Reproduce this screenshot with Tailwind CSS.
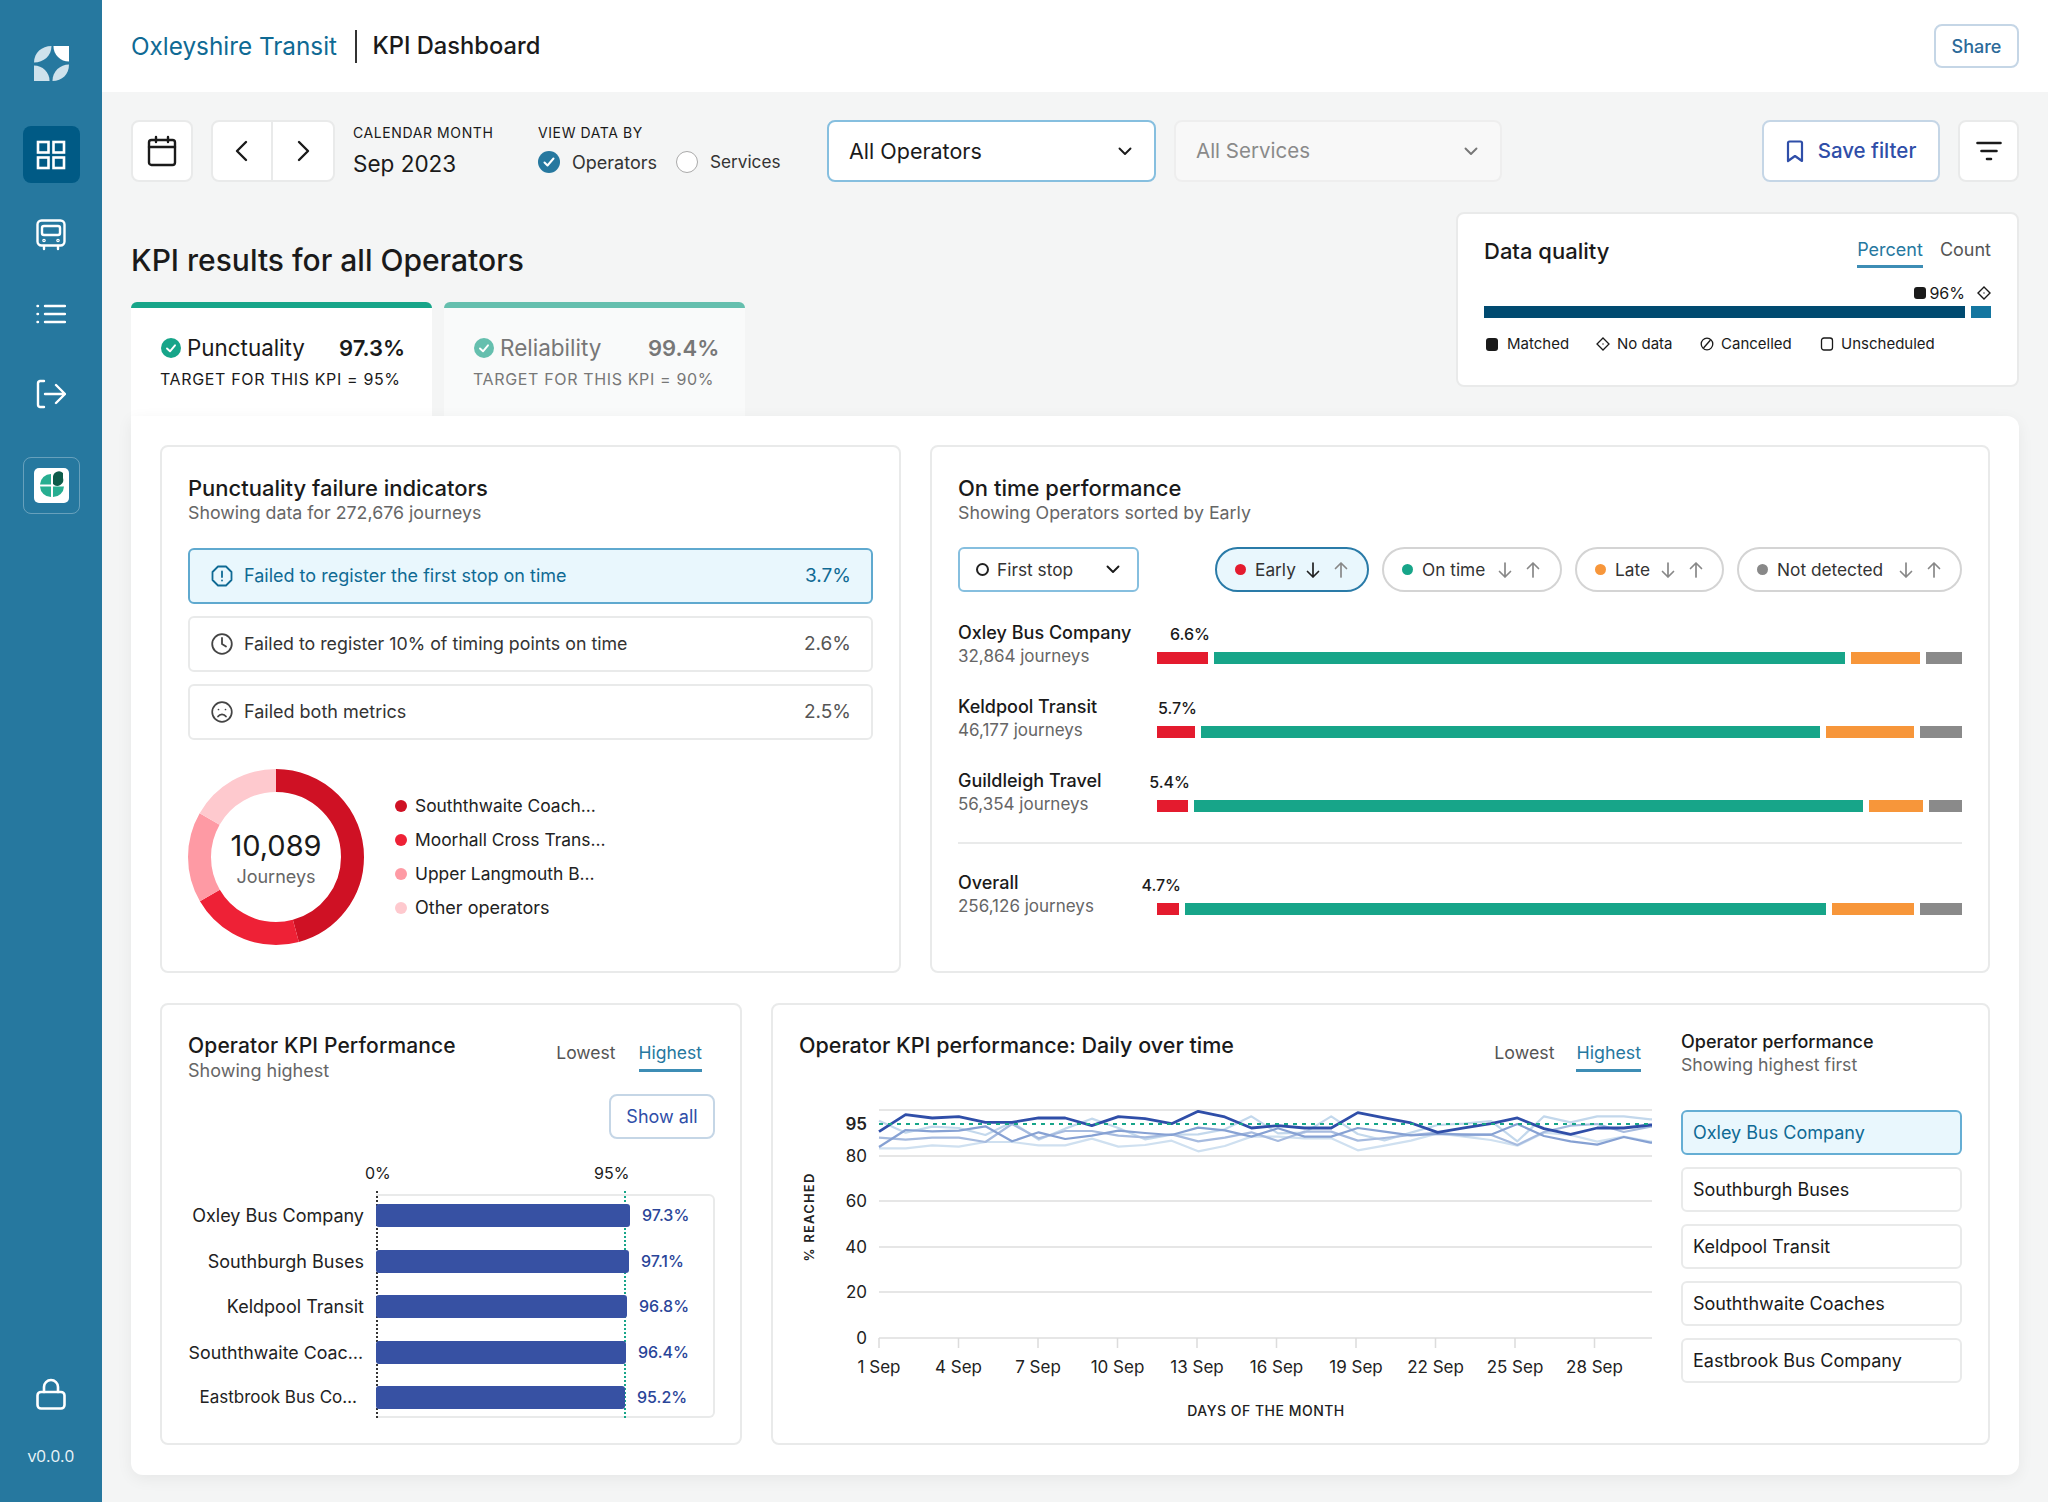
<!DOCTYPE html>
<html lang="en">
<head>
<meta charset="utf-8">
<title>KPI Dashboard</title>
<script src="https://cdn.jsdelivr.net/npm/@tailwindcss/browser@4"></script>
</head>
<body class="font-[family-name:Inter] text-[#1a1a1a]">
<div class="flex w-[2048px] h-[1502px] overflow-hidden bg-[#f4f5f5]">
  <aside class="w-[102px] shrink-0 h-full bg-[#26789f] flex flex-col items-center">
    <svg class="mt-[46px] w-[35px] h-[35px]" viewBox="0 0 36 36">
      <path d="M0 17 C0 7 8 0 18 0 C18 10 10 17 0 17Z" fill="#cfe2ec"/>
      <path d="M20 0 H36 V16 A16 16 0 0 1 20 0Z" fill="#fff"/>
      <path d="M0 20 A16 16 0 0 1 16 36 H0Z" fill="#cfe2ec"/>
      <path d="M19 36 C19 26 27 19 36 19 C36 29 29 36 19 36Z" fill="#cfe2ec"/>
    </svg>
    <div class="mt-[45px] w-[57px] h-[57px] rounded-lg bg-[#005a85] flex items-center justify-center">
      <svg class="w-[30px] h-[30px]" viewBox="0 0 30 30" fill="none" stroke="#fff" stroke-width="2.6"><rect x="2" y="2" width="10.5" height="10.5"/><rect x="17.5" y="2" width="10.5" height="10.5"/><rect x="2" y="17.5" width="10.5" height="10.5"/><rect x="17.5" y="17.5" width="10.5" height="10.5"/></svg>
    </div>
    <div class="mt-[23px] w-[57px] h-[57px] flex items-center justify-center">
      <svg class="w-[30px] h-[32px]" viewBox="0 0 30 32" fill="none" stroke="#fff" stroke-width="2.4" stroke-linecap="round" stroke-linejoin="round"><rect x="1.5" y="1.5" width="27" height="25" rx="4"/><rect x="6" y="7" width="18" height="9" rx="2"/><path d="M8 27v3M22 27v3"/><circle cx="8" cy="21.5" r=".6"/><circle cx="22" cy="21.5" r=".6"/></svg>
    </div>
    <div class="mt-[22px] w-[57px] h-[57px] flex items-center justify-center">
      <svg class="w-[30px] h-[20px]" viewBox="0 0 30 20" fill="none" stroke="#fff" stroke-width="2.4" stroke-linecap="round"><path d="M9 2h20M9 10h20M9 18h20"/><path d="M1.5 2h.5M1.5 10h.5M1.5 18h.5"/></svg>
    </div>
    <div class="mt-[23px] w-[57px] h-[57px] flex items-center justify-center">
      <svg class="w-[30px] h-[30px]" viewBox="0 0 30 30" fill="none" stroke="#fff" stroke-width="2.4" stroke-linecap="round" stroke-linejoin="round"><path d="M8 2H4a2.5 2.5 0 0 0-2 2.500v21a2.500 2.500 0 0 0 2 2.500h4"/><path d="M9 15h20M20 6l9 9-9 9"/></svg>
    </div>
    <div class="mt-[35px] w-[57px] h-[57px] rounded-lg border border-white/30 flex items-center justify-center">
      <svg class="w-[35px] h-[35px]" viewBox="0 0 35 35"><rect width="35" height="35" rx="5" fill="#fff"/>
        <path d="M17 6 V16.500 H6 A11 11 0 0 1 17 6Z" fill="#27ae91"/>
        <path d="M17 18.500 V29 A11 11 0 0 1 6 18.500Z" fill="#27ae91"/>
        <path d="M19 18.500 H30 A11 11 0 0 1 19 29Z" fill="#27ae91"/>
        <path d="M19 16 V10 A6 6 0 0 1 29 5 V10 A6 6 0 0 1 19 16Z" fill="#0d5c4b"/>
      </svg>
    </div>
    <svg class="mt-auto w-[30px] h-[32px]" viewBox="0 0 30 32" fill="none" stroke="#fff" stroke-width="2.6" stroke-linecap="round" stroke-linejoin="round"><rect x="1.500" y="14" width="27" height="16.500" rx="3.500"/><path d="M8 14V9a7 7 0 0 1 14 0v5"/></svg>
    <div class="mt-[35px] mb-[35px] font-[family-name:'Open_Sans'] text-[17px] leading-[22px] text-[#eaf4f8]">v0.0.0</div>
  </aside>

  <main class="flex-1 flex flex-col min-w-0">
    <header class="h-[92px] bg-white flex items-center pl-[29px] pr-[29px] shrink-0">
      <div class="text-[24.300px] leading-[32px] text-[#0f6a94] w-[224px] whitespace-nowrap">Oxleyshire Transit</div>
      <div class="w-[1.5px] h-[33px] bg-[#333]"></div>
      <div class="ml-[16px] text-[23.700px] leading-[32px] font-medium">KPI Dashboard</div>
      <button class="ml-auto w-[85px] h-[44px] rounded-lg border-2 border-[#c5d6e6] text-[18px] font-medium text-[#2c6a99]">Share</button>
    </header>

    <section class="mt-[28px] mx-[29px] flex h-[63px] shrink-0 w-[1888px]">
      <button class="w-[62px] h-[62px] rounded-lg bg-white border-2 border-[#e9eaea] flex items-center justify-center">
        <svg class="w-[30px] h-[32px]" viewBox="0 0 30 32" fill="none" stroke="#1a1a1a" stroke-width="2.4" stroke-linecap="round" stroke-linejoin="round"><rect x="2" y="5" width="26" height="25" rx="2.500"/><path d="M2 12h26M9 2v5M21 2v5"/></svg>
      </button>
      <div class="ml-[18px] w-[124px] h-[62px] rounded-lg bg-white border-2 border-[#e9eaea] flex">
        <button class="w-[60px] h-full border-r-2 border-[#e9eaea] flex items-center justify-center"><svg class="w-[16px] h-[24px]" viewBox="0 0 16 24" fill="none" stroke="#1a1a1a" stroke-width="2.400" stroke-linecap="round" stroke-linejoin="round"><path d="M12 3 3 12l9 9"/></svg></button>
        <button class="flex-1 h-full flex items-center justify-center"><svg class="w-[16px] h-[24px]" viewBox="0 0 16 24" fill="none" stroke="#1a1a1a" stroke-width="2.400" stroke-linecap="round" stroke-linejoin="round"><path d="m4 3 9 9-9 9"/></svg></button>
      </div>
      <div class="ml-[18px] w-[185px] flex flex-col pt-[3px]">
        <div class="text-[14px] leading-[20px] tracking-[0.6px]">CALENDAR MONTH</div>
        <div class="mt-[5px] text-[22.500px] leading-[32px]">Sep 2023</div>
      </div>
      <div class="w-[289px] flex flex-col pt-[3px]">
        <div class="text-[14px] leading-[20px] tracking-[0.6px]">VIEW DATA BY</div>
        <div class="mt-[6px] flex items-center h-[26px]">
          <span class="w-[22px] h-[22px] rounded-full bg-[#26789f] flex items-center justify-center"><svg class="w-[14px] h-[14px]" viewBox="0 0 14 14" fill="none" stroke="#fff" stroke-width="2" stroke-linecap="round" stroke-linejoin="round"><path d="m2.500 7.500 3 3 6-7"/></svg></span>
          <span class="ml-[12px] text-[18px] text-[#333] w-[104px]">Operators</span>
          <span class="w-[22px] h-[22px] rounded-full border-[1.5px] border-[#aaa] bg-white"></span>
          <span class="ml-[12px] text-[17.200px] text-[#333]">Services</span>
        </div>
      </div>
      <button class="w-[329px] h-[62px] rounded-lg bg-white border-2 border-[#86bfdf] flex items-center justify-between pl-[20px] pr-[22px] text-[21.500px]">All Operators
        <svg class="w-[14px] h-[9px]" viewBox="0 0 14 9" fill="none" stroke="#1a1a1a" stroke-width="1.900" stroke-linecap="round" stroke-linejoin="round"><path d="m1.500 1.500 5.500 5.500 5.500-5.500"/></svg>
      </button>
      <button class="ml-[18px] w-[328px] h-[62px] rounded-lg bg-[#f8f8f8] border-2 border-[#eeeeee] flex items-center justify-between pl-[20px] pr-[22px] text-[20.500px] text-[#8a8a8a]">All Services
        <svg class="w-[14px] h-[9px]" viewBox="0 0 14 9" fill="none" stroke="#777" stroke-width="1.900" stroke-linecap="round" stroke-linejoin="round"><path d="m1.500 1.500 5.500 5.500 5.500-5.500"/></svg>
      </button>
      <button class="ml-auto w-[178px] h-[62px] rounded-lg bg-white border-2 border-[#c5d6e6] flex items-center justify-center gap-[14px] text-[20.500px] font-medium text-[#2f4ea8]">
        <svg class="w-[18px] h-[23px]" viewBox="0 0 18 23" fill="none" stroke="#2f4ea8" stroke-width="2.200" stroke-linecap="round" stroke-linejoin="round"><path d="M2 3a1.500 1.500 0 0 1 1.500-1.500h11A1.500 1.500 0 0 1 16 3v18l-7-5-7 5Z"/></svg>
        Save filter
      </button>
      <button class="ml-[18px] w-[61px] h-[62px] rounded-lg bg-white border-2 border-[#e9eaea] flex items-center justify-center">
        <svg class="w-[26px] h-[20px]" viewBox="0 0 26 20" fill="none" stroke="#1a1a1a" stroke-width="2.600" stroke-linecap="round"><path d="M1.500 2h23M5.500 10h15M11 18h4"/></svg>
      </button>
    </section>

    <section class="mt-[29px] mx-[29px] w-[1888px] h-[204px] shrink-0 flex justify-between items-start">
      <div class="h-full flex flex-col">
        <h1 class="mt-[28px] text-[30px] leading-[40px] font-medium">KPI results for all Operators</h1>
        <div class="mt-auto flex gap-[12px]">
          <div class="w-[301px] h-[114px] bg-white rounded-t-md border-t-[6px] border-[#17a589] pl-[29px] pt-[26px]">
            <div class="flex items-center h-[28px]">
              <svg class="ml-[1px] w-[20px] h-[20px]" viewBox="0 0 20 20"><circle cx="10" cy="10" r="10" fill="#17a589"/><path d="m6 10.500 3 2.800 5-6" fill="none" stroke="#fff" stroke-width="1.900" stroke-linecap="round" stroke-linejoin="round"/></svg>
              <span class="ml-[6px] text-[22.400px] w-[152px]">Punctuality</span>
              <span class="text-[22px] font-semibold">97.3%</span>
            </div>
            <div class="mt-[6px] text-[16px] leading-[22px] tracking-[0.64px]">TARGET FOR THIS KPI = 95%</div>
          </div>
          <div class="w-[301px] h-[114px] bg-[#f9fafa] rounded-t-md border-t-[6px] border-[#65bfae] pl-[29px] pt-[26px] text-[#777]">
            <div class="flex items-center h-[28px]">
              <svg class="ml-[1px] w-[20px] h-[20px]" viewBox="0 0 20 20"><circle cx="10" cy="10" r="10" fill="#65bfae"/><path d="m6 10.500 3 2.800 5-6" fill="none" stroke="#fff" stroke-width="1.900" stroke-linecap="round" stroke-linejoin="round"/></svg>
              <span class="ml-[6px] text-[22.500px] w-[148px]">Reliability</span>
              <span class="text-[22px] font-semibold">99.4%</span>
            </div>
            <div class="mt-[6px] text-[16px] leading-[22px] tracking-[0.64px]">TARGET FOR THIS KPI = 90%</div>
          </div>
        </div>
      </div>
      <div class="w-[563px] h-[175px] bg-white rounded-lg border-2 border-[#e9eaea] px-[26px] pt-[23px]">
        <div class="flex justify-between items-start">
          <div class="text-[22px] leading-[28px] font-medium">Data quality</div>
          <div class="flex gap-[17px] text-[18px] leading-[26px]">
            <span class="text-[#26789f] border-b-[3px] border-[#3d8db5] h-[31px]">Percent</span>
            <span class="text-[#555]">Count</span>
          </div>
        </div>
        <div class="mt-[14px] flex justify-end items-center h-[22px] text-[16px]">
          <span class="w-[12px] h-[12px] rounded-[3px] bg-[#1a1a1a]"></span>
          <span class="ml-[3px]">96%</span>
          <svg class="ml-[12px] w-[14px] h-[14px]" viewBox="0 0 14 14" fill="none" stroke="#1a1a1a" stroke-width="1.400"><path d="M7 1 13 7 7 13 1 7Z"/><circle cx="7" cy="7" r=".7" fill="#1a1a1a" stroke="none"/></svg>
        </div>
        <div class="mt-[2px] flex gap-[6px] h-[12px]">
          <div class="w-[481px] bg-[#004a70]"></div>
          <div class="flex-1 bg-[#1476a0]"></div>
        </div>
        <div class="mt-[16px] flex items-center h-[20px] text-[15px]">
          <span class="w-[12px] h-[13px] rounded-[3px] bg-[#1a1a1a] ml-[2px]"></span><span class="ml-[9px] w-[89px]">Matched</span>
          <svg class="w-[14px] h-[14px]" viewBox="0 0 14 14" fill="none" stroke="#1a1a1a" stroke-width="1.300"><path d="M7 1 13 7 7 13 1 7Z"/><circle cx="7" cy="7" r=".7" fill="#1a1a1a" stroke="none"/></svg><span class="ml-[7px] w-[83px]">No data</span>
          <svg class="w-[14px] h-[14px]" viewBox="0 0 14 14" fill="none" stroke="#1a1a1a" stroke-width="1.300"><circle cx="7" cy="7" r="5.800"/><path d="M3.500 11 10.500 3"/></svg><span class="ml-[7px] w-[99px]">Cancelled</span>
          <svg class="w-[14px] h-[14px]" viewBox="0 0 14 14" fill="none" stroke="#1a1a1a" stroke-width="1.300"><rect x="1.500" y="1" width="11" height="12" rx="2.500"/></svg><span class="ml-[7px]">Unscheduled</span>
        </div>
      </div>
    </section>

    <section class="mx-[29px] w-[1888px] h-[1059px] shrink-0 bg-white rounded-b-xl rounded-tr-xl shadow-[0_4px_16px_rgba(0,0,0,0.06)] p-[29px] flex flex-col gap-[30px]">
      <div class="flex gap-[29px] h-[528px]">
        <div class="w-[741px] border-2 border-[#e9eaea] rounded-lg px-[26px] pt-[28px]">
          <h2 class="text-[22px] leading-[26px] font-medium">Punctuality failure indicators</h2>
          <p class="mt-[1px] text-[17.800px] leading-[22px] text-[#666]">Showing data for 272,676 journeys</p>
          <div class="mt-[24px] flex flex-col gap-[12px]">
            <div class="h-[56px] rounded-md border-2 border-[#5fa9cf] bg-[#e9f7fd] flex items-center pl-[21px] pr-[20px] text-[#0f6a94]">
              <svg class="w-[22px] h-[22px]" viewBox="0 0 22 22" fill="none" stroke="#0f6a94" stroke-width="1.800" stroke-linecap="round" stroke-linejoin="round"><path d="M7 1.500h8L20.500 7v8L15 20.500H7L1.500 15V7Z"/><path d="M11 6.500v5.500M11 15.500h.01"/></svg>
              <span class="ml-[11px] text-[18px] mt-[-2px]">Failed to register the first stop on time</span>
              <span class="ml-auto text-[19px]">3.7%</span>
            </div>
            <div class="h-[56px] rounded-md border-2 border-[#e9eaea] flex items-center pl-[21px] pr-[20px] text-[#333]">
              <svg class="w-[22px] h-[22px]" viewBox="0 0 22 22" fill="none" stroke="#444" stroke-width="1.800" stroke-linecap="round" stroke-linejoin="round"><circle cx="11" cy="11" r="9.800"/><path d="M11 5v6l4 2.500"/></svg>
              <span class="ml-[11px] text-[17.800px]">Failed to register 10% of timing points on time</span>
              <span class="ml-auto text-[19px] text-[#555]">2.6%</span>
            </div>
            <div class="h-[56px] rounded-md border-2 border-[#e9eaea] flex items-center pl-[21px] pr-[20px] text-[#333]">
              <svg class="w-[22px] h-[22px]" viewBox="0 0 22 22" fill="none" stroke="#444" stroke-width="1.700" stroke-linecap="round" stroke-linejoin="round"><circle cx="11" cy="11" r="9.800"/><path d="M7 15.500c1-1.500 2.500-2.200 4-2.200s3 .7 4 2.200M7.500 8.500h.01M14.500 8.500h.01"/></svg>
              <span class="ml-[11px] text-[18px] mt-[-2px]">Failed both metrics</span>
              <span class="ml-auto text-[19px] text-[#555]">2.5%</span>
            </div>
          </div>
          <div class="mt-[29px] flex items-center">
            <div class="relative w-[176px] h-[176px]">
              <svg class="w-[176px] h-[176px] -rotate-90" viewBox="0 0 176 176" fill="none" stroke-width="23">
                <circle cx="88" cy="88" r="76.500" pathLength="100" stroke="#cf1124" stroke-dasharray="45.800 54.200"/>
                <circle cx="88" cy="88" r="76.500" pathLength="100" stroke="#ee2136" stroke-dasharray="20.800 79.200" stroke-dashoffset="-45.800"/>
                <circle cx="88" cy="88" r="76.500" pathLength="100" stroke="#fe9aa4" stroke-dasharray="16.700 83.300" stroke-dashoffset="-66.600"/>
                <circle cx="88" cy="88" r="76.500" pathLength="100" stroke="#fec9ce" stroke-dasharray="16.700 83.300" stroke-dashoffset="-83.300"/>
              </svg>
              <div class="absolute inset-0 flex flex-col items-center justify-center">
                <div class="text-[29px] leading-[36px] mt-[2px]">10,089</div>
                <div class="text-[18px] leading-[24px] text-[#666] mt-[1px]">Journeys</div>
              </div>
            </div>
            <ul class="ml-[31px] flex flex-col text-[17.400px] leading-[34px] text-[#222]">
              <li class="flex items-center gap-[8px]"><span class="w-[12px] h-[12px] rounded-full bg-[#cf1124]"></span>Souththwaite Coach…</li>
              <li class="flex items-center gap-[8px]"><span class="w-[12px] h-[12px] rounded-full bg-[#ee2136]"></span>Moorhall Cross Trans…</li>
              <li class="flex items-center gap-[8px]"><span class="w-[12px] h-[12px] rounded-full bg-[#fe9aa4]"></span>Upper Langmouth B…</li>
              <li class="flex items-center gap-[8px] text-[18px]"><span class="w-[12px] h-[12px] rounded-full bg-[#fec9ce]"></span>Other operators</li>
            </ul>
          </div>
        </div>

        <div class="w-[1060px] border-2 border-[#e9eaea] rounded-lg px-[26px] pt-[28px]">
          <h2 class="text-[22px] leading-[26px] font-medium">On time performance</h2>
          <p class="mt-[1px] text-[17.800px] leading-[22px] text-[#666]">Showing Operators sorted by Early</p>
          <div class="mt-[23px] flex h-[45px] text-[17.300px] text-[#333]">
            <div class="w-[181px] rounded-md border-2 border-[#86bfdf] flex items-center pl-[16px] pr-[17px]">
              <span class="w-[13px] h-[13px] rounded-full border-2 border-[#222]"></span>
              <span class="ml-[8px]">First stop</span>
              <svg class="ml-auto w-[14px] h-[9px]" viewBox="0 0 14 9" fill="none" stroke="#1a1a1a" stroke-width="1.900" stroke-linecap="round" stroke-linejoin="round"><path d="m1.500 1.500 5.500 5.500 5.500-5.500"/></svg>
            </div>
            <div class="ml-auto flex gap-[13px]">
              <div class="w-[154px] rounded-full border-2 border-[#2a7ba8] bg-[#e9f7fd] flex items-center pl-[18px]">
                <span class="w-[11px] h-[11px] rounded-full bg-[#e41b2e]"></span><span class="ml-[9px] w-[50px]">Early</span>
                <svg class="w-[16px] h-[18px]" viewBox="0 0 16 18" fill="none" stroke="#222" stroke-width="1.700" stroke-linecap="round" stroke-linejoin="round"><path d="M8 2v14M2.500 10.500 8 16l5.500-5.500"/></svg>
                <svg class="ml-[12px] w-[16px] h-[18px]" viewBox="0 0 16 18" fill="none" stroke="#888" stroke-width="1.700" stroke-linecap="round" stroke-linejoin="round"><path d="M8 16V2M2.500 7.500 8 2l5.500 5.500"/></svg>
              </div>
              <div class="w-[180px] rounded-full border-2 border-[#d4d4d4] flex items-center pl-[18px]">
                <span class="w-[11px] h-[11px] rounded-full bg-[#17a589]"></span><span class="ml-[9px] w-[75px]">On time</span>
                <svg class="w-[16px] h-[18px]" viewBox="0 0 16 18" fill="none" stroke="#888" stroke-width="1.700" stroke-linecap="round" stroke-linejoin="round"><path d="M8 2v14M2.500 10.500 8 16l5.500-5.500"/></svg>
                <svg class="ml-[12px] w-[16px] h-[18px]" viewBox="0 0 16 18" fill="none" stroke="#888" stroke-width="1.700" stroke-linecap="round" stroke-linejoin="round"><path d="M8 16V2M2.500 7.500 8 2l5.500 5.500"/></svg>
              </div>
              <div class="w-[149px] rounded-full border-2 border-[#d4d4d4] flex items-center pl-[18px]">
                <span class="w-[11px] h-[11px] rounded-full bg-[#f7963a]"></span><span class="ml-[9px] w-[45px]">Late</span>
                <svg class="w-[16px] h-[18px]" viewBox="0 0 16 18" fill="none" stroke="#888" stroke-width="1.700" stroke-linecap="round" stroke-linejoin="round"><path d="M8 2v14M2.500 10.500 8 16l5.500-5.500"/></svg>
                <svg class="ml-[12px] w-[16px] h-[18px]" viewBox="0 0 16 18" fill="none" stroke="#888" stroke-width="1.700" stroke-linecap="round" stroke-linejoin="round"><path d="M8 16V2M2.500 7.500 8 2l5.500 5.500"/></svg>
              </div>
              <div class="w-[225px] rounded-full border-2 border-[#d4d4d4] flex items-center pl-[18px]">
                <span class="w-[11px] h-[11px] rounded-full bg-[#888]"></span><span class="ml-[9px] w-[121px]">Not detected</span>
                <svg class="w-[16px] h-[18px]" viewBox="0 0 16 18" fill="none" stroke="#888" stroke-width="1.700" stroke-linecap="round" stroke-linejoin="round"><path d="M8 2v14M2.500 10.500 8 16l5.500-5.500"/></svg>
                <svg class="ml-[12px] w-[16px] h-[18px]" viewBox="0 0 16 18" fill="none" stroke="#888" stroke-width="1.700" stroke-linecap="round" stroke-linejoin="round"><path d="M8 16V2M2.500 7.500 8 2l5.500 5.500"/></svg>
              </div>
            </div>
          </div>

          <div class="mt-[28px] flex flex-col">
            <div class="h-[74px] flex">
              <div class="w-[199px]"><div class="text-[18px] leading-[24px] font-medium whitespace-nowrap pt-[1px]">Oxley Bus Company</div><div class="text-[17px] leading-[23px] text-[#666]">32,864 journeys</div></div>
              <div class="flex-1 pt-[3px]">
                <div class="w-[53px] flex justify-end text-[16px] leading-[22px] font-medium whitespace-nowrap">6.6%</div>
                <div class="mt-[7px] flex gap-[6px] h-[12px]"><div class="w-[51px] bg-[#e41b2e]"></div><div class="w-[631px] bg-[#17a589]"></div><div class="w-[69px] bg-[#f7963a]"></div><div class="flex-1 bg-[#8a8a8a]"></div></div>
              </div>
            </div>
            <div class="h-[74px] flex">
              <div class="w-[199px]"><div class="text-[18px] leading-[24px] font-medium pt-[1px]">Keldpool Transit</div><div class="text-[17px] leading-[23px] text-[#666]">46,177 journeys</div></div>
              <div class="flex-1 pt-[3px]">
                <div class="w-[40px] flex justify-end text-[16px] leading-[22px] font-medium whitespace-nowrap">5.7%</div>
                <div class="mt-[7px] flex gap-[6px] h-[12px]"><div class="w-[38px] bg-[#e41b2e]"></div><div class="w-[619px] bg-[#17a589]"></div><div class="w-[88px] bg-[#f7963a]"></div><div class="flex-1 bg-[#8a8a8a]"></div></div>
              </div>
            </div>
            <div class="h-[74px] flex">
              <div class="w-[199px]"><div class="text-[18px] leading-[24px] font-medium pt-[1px]">Guildleigh Travel</div><div class="text-[17px] leading-[23px] text-[#666]">56,354 journeys</div></div>
              <div class="flex-1 pt-[3px]">
                <div class="w-[33px] flex justify-end text-[16px] leading-[22px] font-medium whitespace-nowrap">5.4%</div>
                <div class="mt-[7px] flex gap-[6px] h-[12px]"><div class="w-[31px] bg-[#e41b2e]"></div><div class="w-[669px] bg-[#17a589]"></div><div class="w-[54px] bg-[#f7963a]"></div><div class="flex-1 bg-[#8a8a8a]"></div></div>
              </div>
            </div>
            <div class="h-[2px] bg-[#e9eaea]"></div>
            <div class="mt-[27px] h-[74px] flex">
              <div class="w-[199px]"><div class="text-[18px] leading-[24px] font-medium">Overall</div><div class="text-[17px] leading-[22px] text-[#666]">256,126 journeys</div></div>
              <div class="flex-1 pt-[3px]">
                <div class="w-[24px] flex justify-end text-[16px] leading-[22px] font-medium whitespace-nowrap">4.7%</div>
                <div class="mt-[7px] flex gap-[6px] h-[12px]"><div class="w-[22px] bg-[#e41b2e]"></div><div class="w-[641px] bg-[#17a589]"></div><div class="w-[82px] bg-[#f7963a]"></div><div class="flex-1 bg-[#8a8a8a]"></div></div>
              </div>
            </div>
          </div>
        </div>
      </div>

      <div class="flex gap-[29px] h-[442px]">
        <div class="w-[582px] border-2 border-[#e9eaea] rounded-lg pl-[26px] pr-[25px] pt-[27px] flex flex-col">
          <div class="flex justify-between items-start">
            <div>
              <h2 class="text-[21px] leading-[26px] font-medium tracking-[0.15px] pt-[1px]">Operator KPI Performance</h2>
              <p class="mt-[1px] text-[18px] leading-[22px] text-[#666]">Showing highest</p>
            </div>
            <div class="mt-[8px] mr-[13px] flex gap-[23px] text-[17.500px] leading-[26px]">
              <span class="text-[#555]">Lowest</span>
              <span class="text-[#26789f] border-b-[3px] border-[#3d8db5] h-[32px]">Highest</span>
            </div>
          </div>
          <button class="mt-[12px] self-end w-[106px] h-[45px] rounded-lg border-2 border-[#c5d6e6] text-[18px] text-[#2f4ea8]">Show all</button>
          <div class="mt-[23px] ml-[177px] flex gap-[205px] text-[16px] leading-[22px] h-[22px]"><span class="w-[24px]">0%</span><span>95%</span></div>
          <div class="mt-[10px] flex">
            <ul class="w-[188px] pt-[10px] flex flex-col gap-[22.600px] text-[18px] leading-[23px] text-right text-[#222] whitespace-nowrap">
              <li class="pr-[12px]">Oxley Bus Company</li>
              <li class="pr-[12px]">Southburgh Buses</li>
              <li class="pr-[12px]">Keldpool Transit</li>
              <li class="pr-[13px] text-[17.800px]">Souththwaite Coac…</li>
              <li class="pr-[19px] text-[17px]">Eastbrook Bus Co…</li>
            </ul>
            <div class="relative w-[339px] h-[224px] border-2 border-l-0 border-[#e9eaea] rounded-r-md pt-[8px] flex flex-col gap-[22.600px] text-[16px] leading-[23px] font-medium text-[#2a4599]">
              <div class="absolute left-0 top-[-5px] bottom-[-2px] border-l-2 border-dotted border-[#333]"></div>
              <div class="absolute left-[248px] top-[-5px] bottom-[-2px] border-l-2 border-dotted border-[#17a589]"></div>
              <div class="relative flex items-center"><div class="h-[23px] w-[254px] rounded-[3px] bg-[#3751a3]"></div><span class="ml-[12px]">97.3%</span></div>
              <div class="relative flex items-center"><div class="h-[23px] w-[253px] rounded-[3px] bg-[#3751a3]"></div><span class="ml-[12px]">97.1%</span></div>
              <div class="relative flex items-center"><div class="h-[23px] w-[251px] rounded-[3px] bg-[#3751a3]"></div><span class="ml-[12px]">96.8%</span></div>
              <div class="relative flex items-center"><div class="h-[23px] w-[250px] rounded-[3px] bg-[#3751a3]"></div><span class="ml-[12px]">96.4%</span></div>
              <div class="relative flex items-center"><div class="h-[23px] w-[249px] rounded-[3px] bg-[#3751a3]"></div><span class="ml-[12px]">95.2%</span></div>
            </div>
          </div>
        </div>

        <div class="w-[1219px] border-2 border-[#e9eaea] rounded-lg px-[26px] pt-[27px] flex gap-[29px]">
          <div class="w-[853px] shrink-0">
            <div class="flex justify-between items-start h-[40px]">
              <h2 class="text-[21.500px] leading-[26px] font-medium">Operator KPI performance: Daily over time</h2>
              <div class="mt-[8px] mr-[11px] flex gap-[22px] text-[17.800px] leading-[26px]">
                <span class="text-[#555]">Lowest</span>
                <span class="text-[#26789f] border-b-[3px] border-[#3d8db5] h-[32px]">Highest</span>
              </div>
            </div>
            <svg class="mt-[23px] w-[853px] h-[335px]" viewBox="0 0 853 335" fill="none">
              <g stroke="#e6e6e6" stroke-width="2">
                <path d="M80 15H853M80 61H853M80 106H853M80 152H853M80 197H853M80 243H853"/>
              </g>
              <g stroke="#dcdcdc" stroke-width="1.500">
                <path d="M80 243v10M159.500 243v10M239 243v10M318.500 243v10M398 243v10M477.500 243v10M557 243v10M636.500 243v10M716 243v10M795.500 243v10"/>
              </g>
              <g transform="translate(80,-95) scale(26.6,0.3333)" stroke-width="2.200" stroke-linejoin="round">
                <polyline vector-effect="non-scaling-stroke" stroke="#cfe0f0" points="0,445 1,445 2,436 3,440 4,426 5,426 6,436 7,436 8,416 9,440 10,435 11,422 12,454 13,438 14,410 15,410 16,415 17,415 18,451 19,437 20,422 21,400 22,410 23,420 24,437 25,398 26,405 27,425 28,410 29,425 29.100,425"/>
                <polyline vector-effect="non-scaling-stroke" stroke="#c3d8ec" points="0,362 1,398 2,380 3,384 4,405 5,367 6,419 7,386 8,356 9,384 10,418 11,404 12,403 13,388 14,349 15,400 16,398 17,349 18,402 19,421 20,398 21,375 22,371 23,363 24,424 25,349 26,367 27,349 28,349 29,358 29.100,358"/>
                <polyline vector-effect="non-scaling-stroke" stroke="#a6bbdf" points="0,413 1,419 2,413 3,413 4,426 5,372 6,415 7,393 8,393 9,407 10,412 11,403 12,424 13,413 14,397 15,423 16,395 17,395 18,422 19,414 20,405 21,398 22,406 23,404 24,435 25,396 26,377 27,372 28,396 29,380 29.100,380"/>
                <polyline vector-effect="non-scaling-stroke" stroke="#86a1d3" points="0,441 1,390 2,394 3,392 4,379 5,424 6,397 7,417 8,407 9,392 10,399 11,405 12,383 13,391 14,410 15,385 16,410 17,410 18,384 19,395 20,406 21,402 22,403 23,404 24,372 25,408 26,424 27,434 28,411 29,428 29.100,428"/>
                <polyline vector-effect="non-scaling-stroke" stroke="#2f4ea8" stroke-width="2.800" points="0,395 1,344 2,354 3,350 4,367 5,367 6,354 7,354 8,377 9,350 10,356 11,371 12,334 13,351 14,384 15,377 16,384 17,384 18,338 19,354 20,369 21,397 22,384 23,371 24,354 25,386 26,403 27,384 28,384 29,375 29.100,375"/>
              </g>
              <path d="M80 29H853" stroke="#17a589" stroke-width="2" stroke-dasharray="4 5"/>
              <g fill="#222" font-size="17" text-anchor="end" dominant-baseline="central">
                <text x="68" y="29" font-weight="600">95</text>
                <text x="68" y="61">80</text>
                <text x="68" y="106">60</text>
                <text x="68" y="152">40</text>
                <text x="68" y="197">20</text>
                <text x="68" y="243">0</text>
              </g>
              <g fill="#222" font-size="17" text-anchor="middle" dominant-baseline="central">
                <text x="80" y="272">1 Sep</text>
                <text x="159.500" y="272">4 Sep</text>
                <text x="239" y="272">7 Sep</text>
                <text x="318.500" y="272">10 Sep</text>
                <text x="398" y="272">13 Sep</text>
                <text x="477.500" y="272">16 Sep</text>
                <text x="557" y="272">19 Sep</text>
                <text x="636.500" y="272">22 Sep</text>
                <text x="716" y="272">25 Sep</text>
                <text x="795.500" y="272">28 Sep</text>
              </g>
              <text x="467" y="315" fill="#222" font-size="14" font-weight="500" letter-spacing="0.500" text-anchor="middle" dominant-baseline="central">DAYS OF THE MONTH</text>
              <text transform="translate(10,122) rotate(-90)" fill="#222" font-size="13" font-weight="600" letter-spacing="1.200" text-anchor="middle" dominant-baseline="central">% REACHED</text>
            </svg>
          </div>
          <div class="flex-1 mt-[-2px]">
            <h3 class="text-[18px] leading-[24px] font-medium">Operator performance</h3>
            <p class="text-[17.700px] leading-[22px] text-[#666]">Showing highest first</p>
            <ul class="mt-[34px] flex flex-col gap-[12px] text-[18px]">
              <li class="h-[45px] rounded-md border-2 border-[#65aed4] bg-[#e9f7fd] text-[#0f6a94] flex items-center pl-[10px]">Oxley Bus Company</li>
              <li class="h-[45px] rounded-md border-2 border-[#e9eaea] flex items-center pl-[10px]">Southburgh Buses</li>
              <li class="h-[45px] rounded-md border-2 border-[#e9eaea] flex items-center pl-[10px]">Keldpool Transit</li>
              <li class="h-[45px] rounded-md border-2 border-[#e9eaea] flex items-center pl-[10px]">Souththwaite Coaches</li>
              <li class="h-[45px] rounded-md border-2 border-[#e9eaea] flex items-center pl-[10px]">Eastbrook Bus Company</li>
            </ul>
          </div>
        </div>
      </div>
    </section>
  </main>
</div>
</body>
</html>
